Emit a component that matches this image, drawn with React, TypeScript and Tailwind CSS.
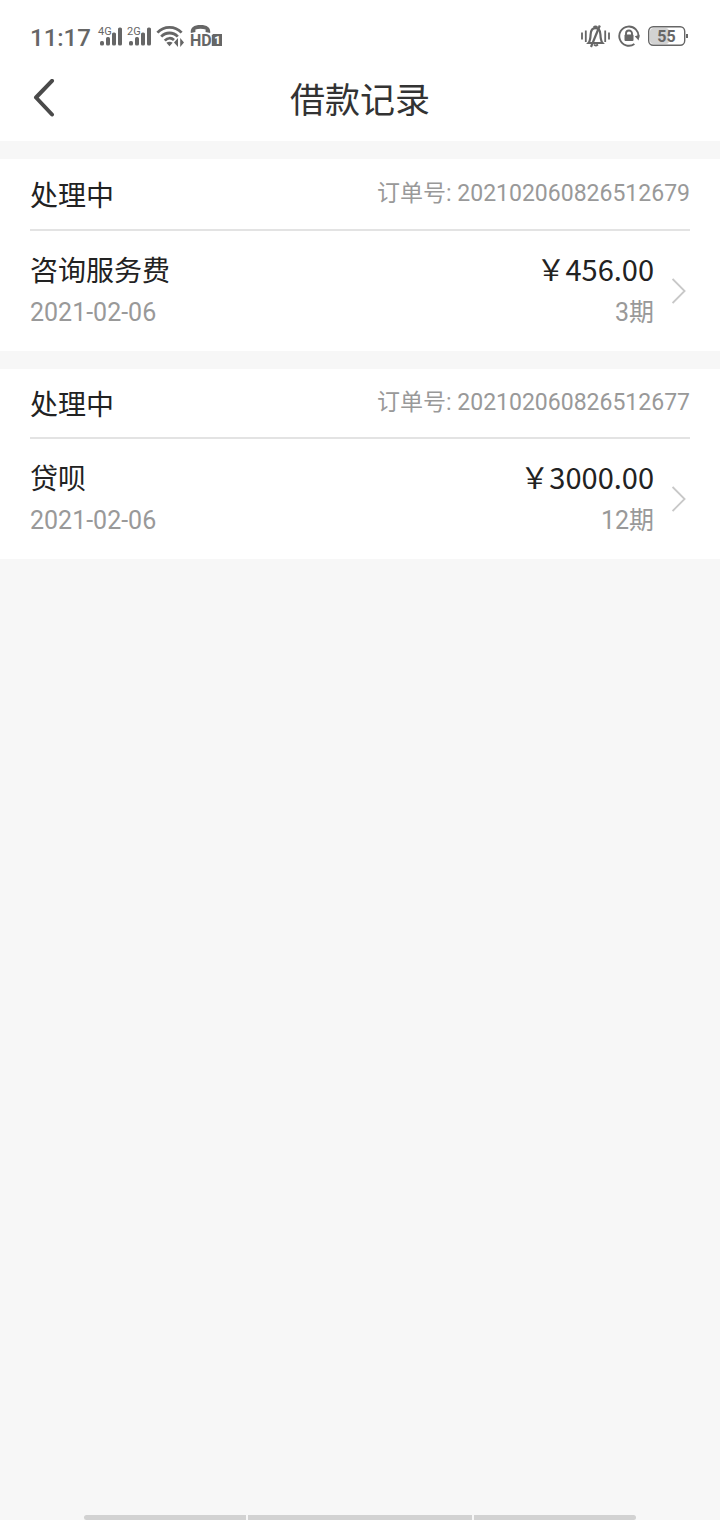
type Loan = {
  orderNo: string
  status: string
  name: string
  date: string
  amount: string
  periods: string
}

const loans: Loan[] = [
  {
    orderNo: '202102060826512679',
    status: '处理中',
    name: '咨询服务费',
    date: '2021-02-06',
    amount: '￥456.00',
    periods: '3期',
  },
  {
    orderNo: '202102060826512677',
    status: '处理中',
    name: '贷呗',
    date: '2021-02-06',
    amount: '￥3000.00',
    periods: '12期',
  },
]

function Signal({ label }: { label: string }) {
  return (
    <svg
      className="overflow-visible"
      width="24"
      height="20"
      viewBox="0 0 24 20"
      fill="currentColor"
    >
      <text x="0" y="9" fontSize="11">
        {label}
      </text>
      <rect x="2" y="15" width="4" height="4.5" rx="1.6" />
      <rect x="8" y="11" width="4" height="8.5" rx="1.6" />
      <rect x="14" y="6.5" width="4" height="13" rx="1.6" />
      <rect x="20" y="1.5" width="4" height="18" rx="1.6" />
    </svg>
  )
}

function Wifi() {
  return (
    <svg
      width="28"
      height="22"
      viewBox="0 0 28 22"
      fill="none"
      stroke="currentColor"
      strokeWidth="2.8"
    >
      <path d="M1.4 7.6C8 .6 19 .6 25.6 7.6" />
      <path d="M5.2 11.6C9.8 6.8 17.2 6.8 21.8 11.6" />
      <path d="M8.8 15.6C11.6 12.6 15.4 12.6 18 15" />
      <path
        d="M10.4 17.8Q13.5 15.6 16.6 17.8L13.5 21.2Z"
        fill="currentColor"
        stroke="none"
      />
      <path
        d="M22 13V22L18 17.5ZM24.2 13V22L28 17.5Z"
        fill="currentColor"
        stroke="none"
      />
    </svg>
  )
}

function HdCall() {
  return (
    <svg
      className="overflow-visible"
      width="33"
      height="26"
      viewBox="0 0 33 26"
      fill="currentColor"
    >
      <path d="M1.8 10C1.2 4.5 5 2 11.5 2S21.8 4.5 21.2 10L16.6 9V6.6C13.4 5.4 9.6 5.4 6.4 6.600V9Z" />
      <text x="1" y="23" fontSize="16" fontWeight="700">
        HD
      </text>
      <path d="M24 11H33V23H22.800V12.500Z" />
      <text x="25.200" y="21" fontSize="11" fontWeight="900" fill="#fff">
        1
      </text>
    </svg>
  )
}

function BellOff() {
  return (
    <svg
      width="29"
      height="24"
      viewBox="0 0 29 24"
      fill="none"
      stroke="currentColor"
      strokeWidth="1.8"
    >
      <path d="M1 8.5V15.5M4.8 6.5V18M24.2 6.5V18M28 8.5V15.5" />
      <path
        d="M7.5 19H21.5C19.8 17 19.6 15 19.4 10.5C19.2 6.5 17.4 4.2 14.5 4.2S9.8 6.5 9.6 10.5C9.4 15 9.2 17 7.5 19Z"
        strokeWidth="2.2"
      />
      <path d="M12.5 3.6Q14.5 1.4 16.5 3.6M13 20.5Q14.5 22.5 17 20.5" />
      <path d="M18.8 1.5L10 23" strokeWidth="2.2" />
    </svg>
  )
}

function RotationLock() {
  return (
    <svg
      width="22"
      height="22"
      viewBox="0 0 22 22"
      fill="none"
      stroke="currentColor"
      strokeWidth="1.9"
    >
      <path d="M16.4 19A9.6 9.6 0 1 1 20.4 12.5" />
      <path d="M16.8 11.2L20.6 15.4L21.6 9.8Z" fill="currentColor" stroke="none" />
      <path d="M8 10V8.5A3 3 0 0 1 14 8.5V10" />
      <rect
        x="6.5"
        y="9.5"
        width="9"
        height="6.5"
        rx="1"
        fill="currentColor"
        stroke="none"
      />
    </svg>
  )
}

function Battery() {
  return (
    <svg width="40" height="20" viewBox="0 0 40 20">
      <rect x="2" y="2" width="19" height="16" rx="3.5" fill="#d2d2d2" />
      <rect
        x="0.7"
        y="0.7"
        width="36"
        height="18.6"
        rx="4.5"
        fill="none"
        stroke="currentColor"
        strokeWidth="1.4"
      />
      <rect x="38" y="8" width="2" height="4" fill="currentColor" />
      <text
        x="18.5"
        y="16"
        fontSize="16"
        fontWeight="700"
        textAnchor="middle"
        fill="currentColor"
      >
        55
      </text>
    </svg>
  )
}

function StatusBar() {
  return (
    <div className="flex h-14 items-center justify-between pt-4 pr-8 pl-[30px] text-[#666]">
      <div className="flex items-center gap-[5px]">
        <span className="mr-0.5 pt-1 text-2xl leading-6 font-medium">11:17</span>
        <Signal label="4G" />
        <Signal label="2G" />
        <Wifi />
        <HdCall />
      </div>
      <div className="flex items-center gap-2">
        <BellOff />
        <RotationLock />
        <Battery />
      </div>
    </div>
  )
}

function LoanCard({ loan }: { loan: Loan }) {
  return (
    <li className="group bg-white px-[30px]">
      <div className="box-content flex h-[70px] items-center justify-between border-b-2 border-[#e3e3e3] group-last:h-[68px]">
        <span className="font-['Noto_Sans_CJK_SC',sans-serif] text-[28px] text-[#222]">
          {loan.status}
        </span>
        <span className="text-[23px] text-[#999]">订单号: {loan.orderNo}</span>
      </div>

      <a href="#" className="flex h-[120px] items-center justify-between">
        <div className="leading-[43px]">
          <p className="font-['Noto_Sans_CJK_SC',sans-serif] text-[28px] text-[#222]">
            {loan.name}
          </p>
          <p className="text-[25px] text-[#999]">{loan.date}</p>
        </div>
        <div className="flex items-center gap-[18px]">
          <div className="text-right">
            <p className="mb-[3px] font-['Noto_Sans_CJK_SC',sans-serif] text-[29px] leading-10 text-[#222]">
              {loan.amount}
            </p>
            <p className="text-[25px] leading-[43px] text-[#999]">{loan.periods}</p>
          </div>
          <svg
            className="mr-1"
            width="14"
            height="26"
            viewBox="0 0 14 26"
            fill="none"
            stroke="#c8c8c8"
            strokeWidth="1.8"
          >
            <path d="M.6 1L12.6 13L.6 25" />
          </svg>
        </div>
      </a>
    </li>
  )
}

export default function App() {
  return (
    <div className="flex min-h-screen flex-col bg-[#f7f7f7] font-['Roboto','Noto_Sans_CJK_SC',sans-serif]">
      <header className="bg-white">
        <StatusBar />
        <div className="grid h-[85px] grid-cols-[1fr_auto_1fr] items-center px-8">
          <button type="button" aria-label="返回" className="justify-self-start">
            <svg
              width="24"
              height="40"
              viewBox="0 0 24 40"
              fill="none"
              stroke="#4a4a4a"
              strokeWidth="4"
              strokeLinecap="round"
              strokeLinejoin="round"
            >
              <path d="M20 1.8L4 18.5L20 35.5" />
            </svg>
          </button>
          <h1 className="font-['Noto_Sans_CJK_SC',sans-serif] text-[35px] text-[#333]">
            借款记录
          </h1>
        </div>
      </header>

      <ul className="mt-[18px] space-y-[18px]">
        {loans.map((loan) => (
          <LoanCard key={loan.orderNo} loan={loan} />
        ))}
      </ul>

      {/* system gesture bar */}
      <div className="mt-auto flex h-[5px] gap-0.5 px-[84px]">
        <div className="flex-[162] rounded-l-full bg-[#d2d2d2]" />
        <div className="flex-[224] bg-[#d2d2d2]" />
        <div className="flex-[162] rounded-r-full bg-[#d2d2d2]" />
      </div>
    </div>
  )
}
